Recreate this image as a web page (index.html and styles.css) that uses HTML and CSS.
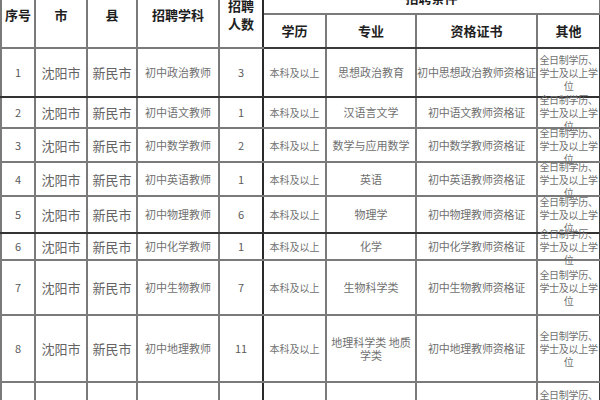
FILE: index.html
```html
<!DOCTYPE html>
<html lang="zh">
<head>
<meta charset="utf-8">
<link rel="stylesheet" href="styles.css">
</head>
<body>
<table class="grid">
  <colgroup>
    <col class="c-no"><col class="c-city"><col class="c-county"><col class="c-subj"><col class="c-num">
    <col class="c-edu"><col class="c-major"><col class="c-cert"><col class="c-other">
  </colgroup>
  <thead>
    <tr class="ha">
      <th rowspan="2">序号</th>
      <th rowspan="2">市</th>
      <th rowspan="2">县</th>
      <th rowspan="2">招聘学科</th>
      <th rowspan="2" class="two thick-l thick-r">招聘<br>人数</th>
      <th colspan="4">招聘条件</th>
    </tr>
    <tr class="hb">
      <th>学历</th>
      <th>专业</th>
      <th>资格证书</th>
      <th class="edge">其他</th>
    </tr>
  </thead>
  <tbody>
    <tr class="r1 dark-b">
      <td class="no">1</td><td class="big">沈阳市</td><td class="big">新民市</td><td>初中政治教师</td><td class="no thick-l thick-r">3</td>
      <td class="edu">本科及以上</td><td>思想政治教育</td><td class="cert">初中思想政治教师资格证</td>
      <td class="other edge"><div>全日制学历、学士及以上学位</div></td>
    </tr>
    <tr class="r2">
      <td class="no">2</td><td class="big">沈阳市</td><td class="big">新民市</td><td>初中语文教师</td><td class="no thick-l thick-r">1</td>
      <td class="edu">本科及以上</td><td>汉语言文学</td><td class="cert">初中语文教师资格证</td>
      <td class="other edge"><div>全日制学历、学士及以上学位</div></td>
    </tr>
    <tr class="r3">
      <td class="no">3</td><td class="big">沈阳市</td><td class="big">新民市</td><td>初中数学教师</td><td class="no thick-l thick-r">2</td>
      <td class="edu">本科及以上</td><td>数学与应用数学</td><td class="cert">初中数学教师资格证</td>
      <td class="other edge"><div>全日制学历、学士及以上学位</div></td>
    </tr>
    <tr class="r4">
      <td class="no">4</td><td class="big">沈阳市</td><td class="big">新民市</td><td>初中英语教师</td><td class="no thick-l thick-r">1</td>
      <td class="edu">本科及以上</td><td>英语</td><td class="cert">初中英语教师资格证</td>
      <td class="other edge"><div>全日制学历、学士及以上学位</div></td>
    </tr>
    <tr class="r5 dark-b">
      <td class="no">5</td><td class="big">沈阳市</td><td class="big">新民市</td><td>初中物理教师</td><td class="no thick-l thick-r">6</td>
      <td class="edu">本科及以上</td><td>物理学</td><td class="cert">初中物理教师资格证</td>
      <td class="other edge"><div>全日制学历、学士及以上学位</div></td>
    </tr>
    <tr class="r6">
      <td class="no">6</td><td class="big">沈阳市</td><td class="big">新民市</td><td>初中化学教师</td><td class="no thick-l thick-r">1</td>
      <td class="edu">本科及以上</td><td>化学</td><td class="cert">初中化学教师资格证</td>
      <td class="other edge"><div>全日制学历、学士及以上学位</div></td>
    </tr>
    <tr class="r7">
      <td class="no">7</td><td class="big">沈阳市</td><td class="big">新民市</td><td>初中生物教师</td><td class="no thick-l thick-r">7</td>
      <td class="edu">本科及以上</td><td>生物科学类</td><td class="cert">初中生物教师资格证</td>
      <td class="other edge"><div>全日制学历、学士及以上学位</div></td>
    </tr>
    <tr class="r8">
      <td class="no">8</td><td class="big">沈阳市</td><td class="big">新民市</td><td>初中地理教师</td><td class="no thick-l thick-r">11</td>
      <td class="edu">本科及以上</td><td>地理科学类 地质学类</td><td class="cert">初中地理教师资格证</td>
      <td class="other edge"><div>全日制学历、学士及以上学位</div></td>
    </tr>
    <tr class="r9">
      <td class="no">9</td><td class="big">沈阳市</td><td class="big">新民市</td><td>初中历史教师</td><td class="no thick-l thick-r">4</td>
      <td class="edu">本科及以上</td><td>历史学</td><td class="cert">初中历史教师资格证</td>
      <td class="other edge"><div>全日制学历、学士及以上学位</div></td>
    </tr>
  </tbody>
</table>
</body>
</html>
```

FILE: styles.css
```css
html, body {
  margin: 0;
  padding: 0;
  background: #fff;
  overflow: hidden;
  height: 400px;
}

.grid {
  margin-top: -19px;
  width: 600px;
  table-layout: fixed;
  border-collapse: collapse;
  font-family: "Noto Sans CJK SC", "Noto Sans", sans-serif;
}

.c-no { width: 34px; }
.c-city { width: 52px; }
.c-county { width: 50px; }
.c-subj { width: 82px; }
.c-num { width: 44px; }
.c-edu { width: 63px; }
.c-major { width: 90px; }
.c-cert { width: 121px; }
.c-other { width: 63px; }

.grid th,
.grid td {
  border: 2px solid #7a7a7a;
  padding: 0 2px;
  text-align: center;
  vertical-align: middle;
  overflow: visible;
}

.grid th {
  font-size: 13px;
  font-weight: 700;
  color: #1e1e1e;
  line-height: 16px;
}

.grid th.two {
  line-height: 18px;
}

.ha { height: 32px; }
.hb { height: 34px; }
.hb th { border-bottom: 2px solid #3a3a3a; }

.grid td {
  font-size: 11px;
  color: #707070;
  line-height: 13px;
}

.grid td.big {
  font-size: 13px;
  color: #636363;
}

.grid td.no {
  font-size: 11px;
  color: #5a5a5a;
}

.grid td.edu {
  font-size: 10px;
}

.grid td.cert {
  white-space: nowrap;
  padding: 0;
  letter-spacing: -0.2px;
}

.grid .thick-l { border-left: 2px solid #2a2a2a; }
.grid .thick-r { border-right: 2px solid #2a2a2a; }
.grid .edge { border-right: 2px solid #3a3a3a; }

.dark-b td { border-bottom: 2px solid #333; }

.grid td.other {
  font-size: 10px;
  letter-spacing: -0.3px;
  padding: 0;
}

.grid td.other div {
  height: 0;
  display: flex;
  align-items: center;
  justify-content: center;
}

.r1 { height: 49px; }
.r2 { height: 31px; }
.r3 { height: 34px; }
.r4 { height: 34px; }
.r5 { height: 37px; }
.r6 { height: 27px; }
.r7 { height: 55px; }
.r8 { height: 67px; }
.r9 { height: 50px; }
```
